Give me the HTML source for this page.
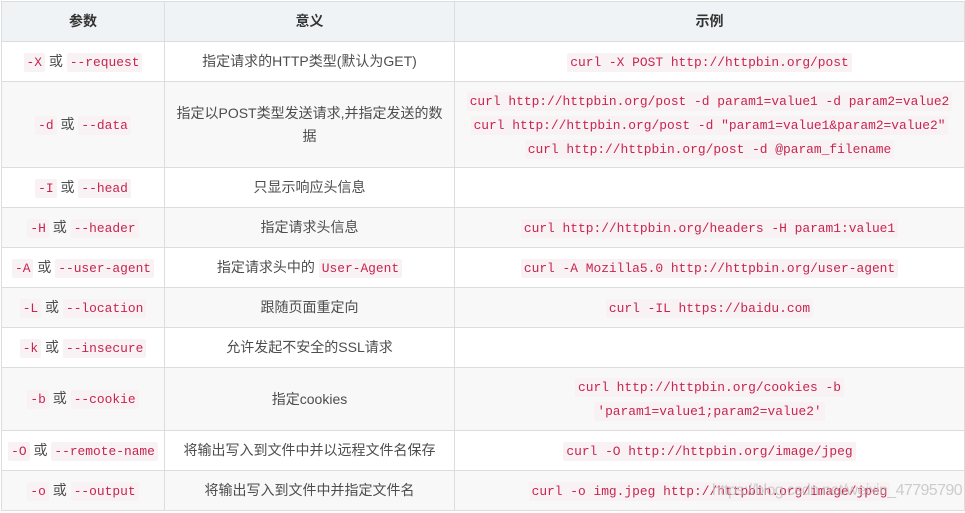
<!DOCTYPE html>
<html><head><meta charset="utf-8"><style>
body{margin:0;background:#fff;width:965px;height:513px;overflow:hidden;font-family:"Liberation Sans","Noto Sans CJK SC",sans-serif;font-size:14px;color:#4d4d4d;position:relative}
table{position:absolute;left:1px;top:1px;border-collapse:collapse;width:963px;table-layout:fixed}
td,th{border:1px solid #ddd;text-align:center;padding:0 6px;line-height:23px}
th{background:#eff3f5;font-weight:bold;height:39px;color:#333}
tr:nth-child(odd) td{background:#f8f8f8}
code{font-family:"Liberation Mono",monospace;font-size:12.9px;color:#c7254e;background:#f9f2f4;padding:2px 3px;border-radius:2px}
.wm{position:absolute;left:712px;top:482px;font-size:16px;color:rgba(190,190,190,0.75);font-family:"Liberation Sans",sans-serif;white-space:nowrap;letter-spacing:-0.6px}
</style></head><body>
<table>
<colgroup><col style="width:163px"><col style="width:290px"><col style="width:510px"></colgroup>
<tr><th>参数</th><th>意义</th><th>示例</th></tr>
<tr style="height:40px"><td><code>-X</code> 或 <code>--request</code></td><td>指定请求的HTTP类型(默认为GET)</td><td><code>curl -X POST http://httpbin.org/post</code></td></tr>
<tr style="height:86px"><td><code>-d</code> 或 <code>--data</code></td><td>指定以POST类型发送请求,并指定发送的数据</td><td><code>curl http://httpbin.org/post -d param1=value1 -d param2=value2</code><br><code>curl http://httpbin.org/post -d "param1=value1&amp;param2=value2"</code><br><code>curl http://httpbin.org/post -d @param_filename</code></td></tr>
<tr style="height:40px"><td><code>-I</code> 或 <code>--head</code></td><td>只显示响应头信息</td><td></td></tr>
<tr style="height:40px"><td><code>-H</code> 或 <code>--header</code></td><td>指定请求头信息</td><td><code>curl http://httpbin.org/headers -H param1:value1</code></td></tr>
<tr style="height:40px"><td><code>-A</code> 或 <code>--user-agent</code></td><td>指定请求头中的 <code>User-Agent</code></td><td><code>curl -A Mozilla5.0 http://httpbin.org/user-agent</code></td></tr>
<tr style="height:40px"><td><code>-L</code> 或 <code>--location</code></td><td>跟随页面重定向</td><td><code>curl -IL https://baidu.com</code></td></tr>
<tr style="height:40px"><td><code>-k</code> 或 <code>--insecure</code></td><td>允许发起不安全的SSL请求</td><td></td></tr>
<tr style="height:63px"><td><code>-b</code> 或 <code>--cookie</code></td><td>指定cookies</td><td><code>curl http://httpbin.org/cookies -b</code><br><code>'param1=value1;param2=value2'</code></td></tr>
<tr style="height:40px"><td><code>-O</code> 或 <code>--remote-name</code></td><td>将输出写入到文件中并以远程文件名保存</td><td><code>curl -O http://httpbin.org/image/jpeg</code></td></tr>
<tr style="height:40px"><td><code>-o</code> 或 <code>--output</code></td><td>将输出写入到文件中并指定文件名</td><td><code>curl -o img.jpeg http://httpbin.org/image/jpeg</code></td></tr>
</table>
<div class="wm">https://blog.csdn.net/weixin_47795790</div>
</body></html>
